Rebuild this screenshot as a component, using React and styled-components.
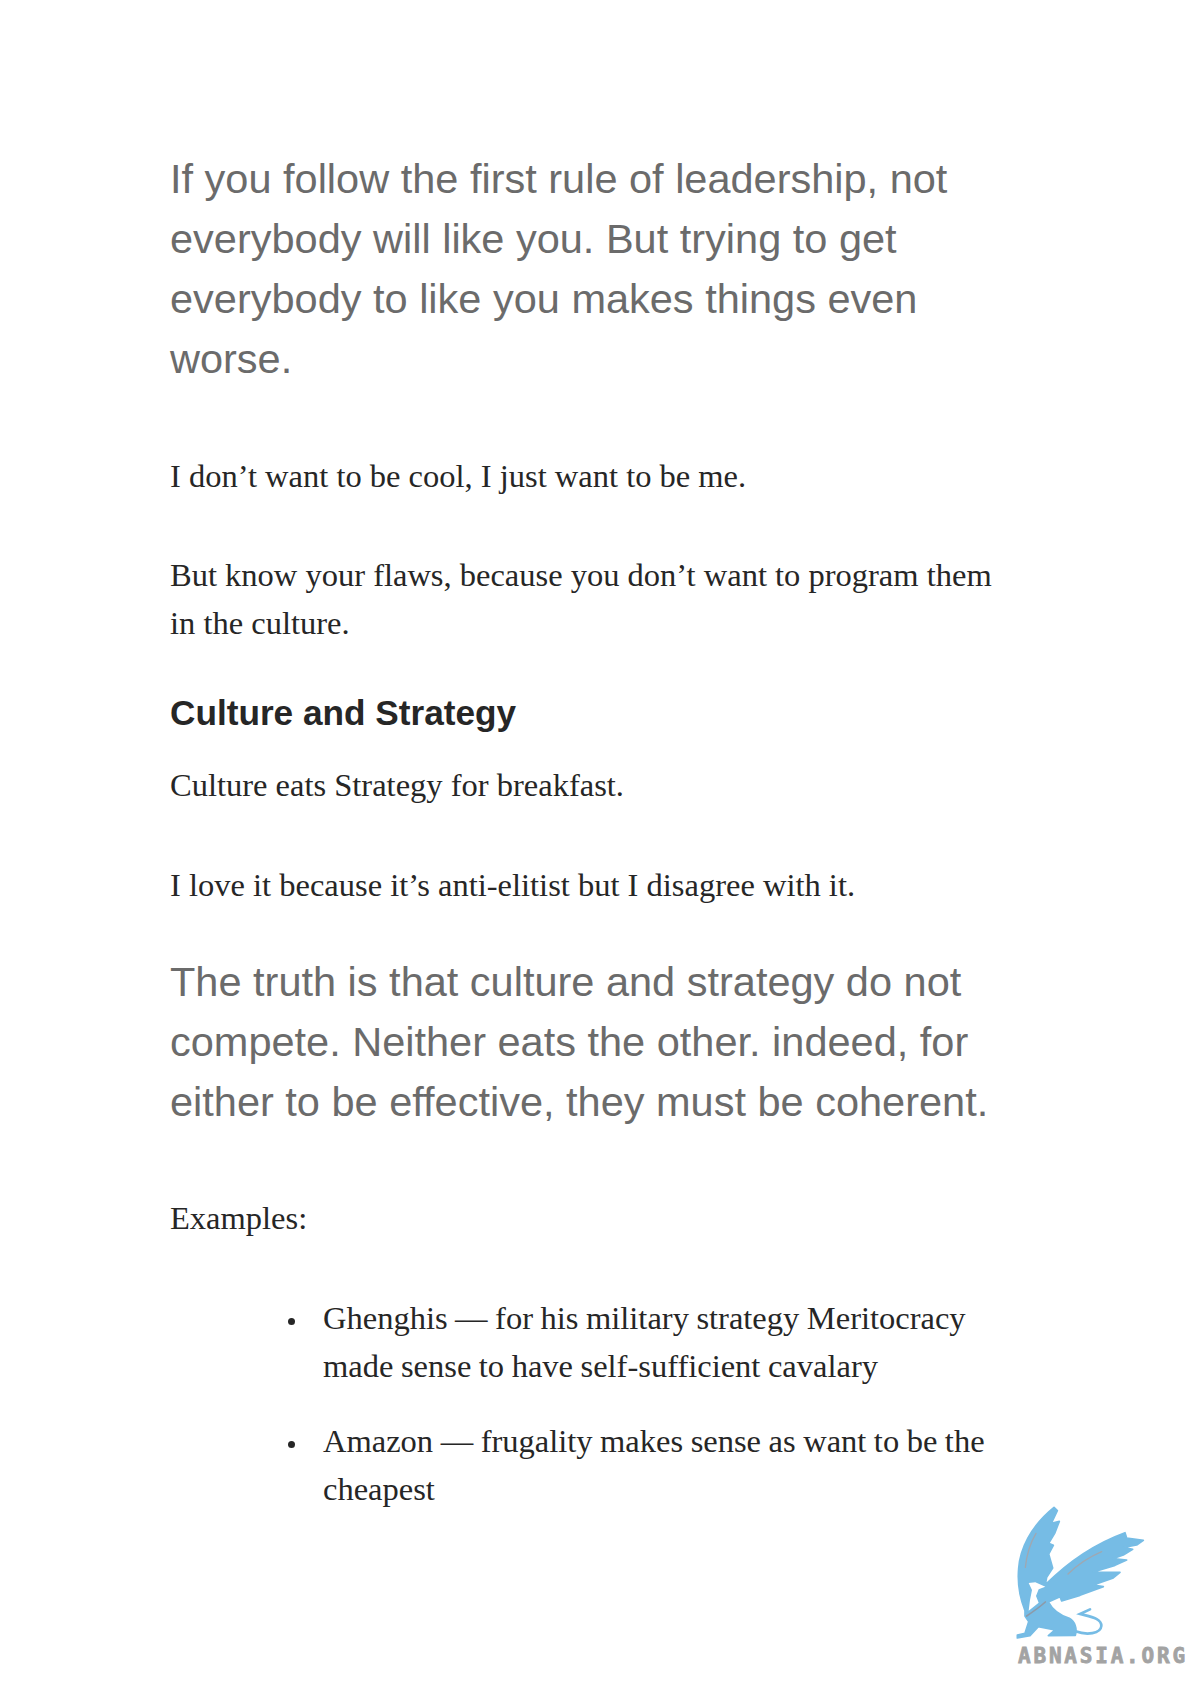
import React from 'react';
import styled, { createGlobalStyle } from 'styled-components';

const Global = createGlobalStyle`
  html, body { margin: 0; padding: 0; background: #fff; }
`;

const Page = styled.main`
  position: relative;
  width: 1191px;
  height: 1684px;
  box-sizing: border-box;
  padding: 149px 175px 0 170px;
  overflow: hidden;
`;

const PullQuote = styled.p`
  margin: ${(p) => p.$mt || 0}px 0 0;
  font-family: "Liberation Sans", Arial, sans-serif;
  font-size: 41.5px;
  line-height: 60px;
  color: #6b6b6b;
`;

const Body = styled.p`
  margin: ${(p) => p.$mt || 0}px 0 0;
  font-family: "Liberation Serif", "Times New Roman", serif;
  font-size: 32.5px;
  line-height: 48px;
  color: #262626;
`;

const Heading = styled.h2`
  margin: 42px 0 0;
  font-family: "Liberation Sans", Arial, sans-serif;
  font-weight: 700;
  font-size: 35.2px;
  line-height: 48px;
  color: #262626;
`;

const List = styled.ul`
  margin: 52px 0 0;
  padding: 0 0 0 153px;
  list-style: none;
  display: flex;
  flex-direction: column;
  gap: 27px;
`;

const Item = styled.li`
  position: relative;
  font-family: "Liberation Serif", "Times New Roman", serif;
  font-size: 32.5px;
  line-height: 48px;
  color: #262626;
  word-spacing: -0.6px;

  &::before {
    content: "";
    position: absolute;
    left: -35px;
    top: 24px;
    width: 7px;
    height: 7px;
    border-radius: 50%;
    background: #262626;
  }
`;

const Watermark = styled.div`
  position: absolute;
  right: 0;
  bottom: 0;
  width: 211px;
  height: 194px;
`;

const WatermarkText = styled.span`
  position: absolute;
  left: 38px;
  top: 153px;
  font-family: "DejaVu Sans Mono", monospace;
  font-weight: 700;
  font-size: 21px;
  line-height: 26px;
  letter-spacing: 2.8px;
  color: #a3a3a3;
  -webkit-text-stroke: 0.8px #a3a3a3;
  white-space: nowrap;
`;

const Griffin = () => (
  <svg width="211" height="194" viewBox="0 0 633 582" style={{ position: 'absolute', left: 0, top: 0 }}>
    <path fill="#76bce5" stroke="#76bce5" strokeWidth="5" strokeLinejoin="round" d="M135 362 C118 320 112 280 116 235 C120 180 150 110 222 52 L232 62 L214 100 L238 94 L224 130 L206 160 L220 166 L206 192 L218 234 L200 262 L196 284 C240 240 320 170 435 128 L440 144 L490 151 L470 165 L430 172 L458 178 L430 195 L398 206 L440 210 L405 226 L340 246 L420 247 L398 265 L340 285 L370 290 L300 316 L245 333 L240 320 L205 336 C215 355 235 375 268 385 C285 395 292 415 286 436 L205 437 L225 420 L175 410 L150 437 L112 444 L112 435 L135 430 L146 395 L135 378 Z" />
    <path fill="#fff" d="M146 279 L166 277 L196 290 L176 298 L168 318 L176 338 L146 362 L150 330 L156 300 Z" />
    <path fill="none" stroke="#76bce5" strokeWidth="8" strokeLinecap="round" d="M286 424 C320 436 362 432 364 408 C365 384 330 380 300 372 L330 358" />
    <path fill="none" stroke="#9fa8b2" strokeWidth="4" strokeLinecap="round" d="M168 130 C150 160 140 195 136 232" />
    <path fill="none" stroke="#9fa8b2" strokeWidth="4" strokeLinecap="round" d="M365 185 C330 200 295 222 264 252" />
    <path fill="none" stroke="#8d9aa8" strokeWidth="5" strokeLinecap="round" d="M196 336 C178 352 158 366 140 378" />
  </svg>
);

export default function App() {
  return (
    <Page>
      <Global />
      <PullQuote>
        If you follow the first rule of leadership, not everybody will like you. But trying to get everybody to like you makes things even worse.
      </PullQuote>
      <Body $mt={63}>I don’t want to be cool, I just want to be me.</Body>
      <Body $mt={51}>But know your flaws, because you don’t want to program them in the culture.</Body>
      <Heading>Culture and Strategy</Heading>
      <Body $mt={24}>Culture eats Strategy for breakfast.</Body>
      <Body $mt={52}>I love it because it’s anti-elitist but I disagree with it.</Body>
      <PullQuote $mt={43}>
        The truth is that culture and strategy do not compete. Neither eats the other. indeed, for either to be effective, they must be coherent.
      </PullQuote>
      <Body $mt={62}>Examples:</Body>
      <List>
        <Item>Ghenghis — for his military strategy Meritocracy made sense to have self-sufficient cavalary</Item>
        <Item>Amazon — frugality makes sense as want to be the cheapest</Item>
      </List>
      <Watermark>
        <Griffin />
        <WatermarkText>ABNASIA.ORG</WatermarkText>
      </Watermark>
    </Page>
  );
}
